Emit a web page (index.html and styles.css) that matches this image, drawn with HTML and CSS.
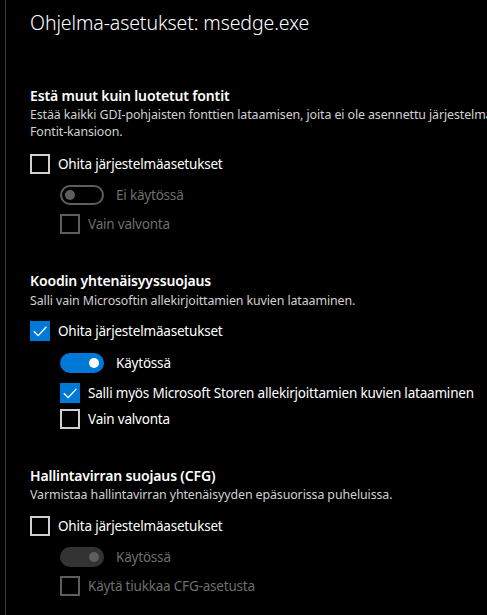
FILE: index.html
```html
<!DOCTYPE html>
<html lang="fi">
<head>
<meta charset="utf-8">
<title>Ohjelma-asetukset: msedge.exe</title>
<link rel="stylesheet" href="styles.css">
</head>
<body>
<div class="frame">
  <main class="page">
    <h1 class="title">Ohjelma-asetukset: msedge.exe</h1>

    <section class="group">
      <h2 class="head">Estä muut kuin luotetut fontit</h2>
      <p class="desc">Estää kaikki GDI-pohjaisten fonttien lataamisen, joita ei ole asennettu järjestelmän Fontit-kansioon.</p>
      <div class="row"><span class="box"></span><span class="label">Ohita järjestelmäasetukset</span></div>
      <div class="sub">
        <div class="trow disabled"><span class="toggle off"><span class="knob"></span></span><span class="label">Ei käytössä</span></div>
        <div class="row disabled"><span class="box"></span><span class="label">Vain valvonta</span></div>
      </div>
    </section>

    <section class="group g2">
      <h2 class="head">Koodin yhtenäisyyssuojaus</h2>
      <p class="desc">Salli vain Microsoftin allekirjoittamien kuvien lataaminen.</p>
      <div class="row"><span class="box checked"><svg viewBox="0 0 20 20"><path d="M3.8 10.2 L8.2 14.6 L16.4 5.8" /></svg></span><span class="label">Ohita järjestelmäasetukset</span></div>
      <div class="sub">
        <div class="trow"><span class="toggle on"><span class="knob"></span></span><span class="label">Käytössä</span></div>
        <div class="row tight"><span class="box checked"><svg viewBox="0 0 20 20"><path d="M3.8 10.2 L8.2 14.6 L16.4 5.8" /></svg></span><span class="label">Salli myös Microsoft Storen allekirjoittamien kuvien lataaminen</span></div>
        <div class="row tight"><span class="box"></span><span class="label">Vain valvonta</span></div>
      </div>
    </section>

    <section class="group g3">
      <h2 class="head">Hallintavirran suojaus (CFG)</h2>
      <p class="desc">Varmistaa hallintavirran yhtenäisyyden epäsuorissa puheluissa.</p>
      <div class="row"><span class="box"></span><span class="label">Ohita järjestelmäasetukset</span></div>
      <div class="sub">
        <div class="trow disabled"><span class="toggle ondis"><span class="knob"></span></span><span class="label">Käytössä</span></div>
        <div class="row disabled"><span class="box"></span><span class="label">Käytä tiukkaa CFG-asetusta</span></div>
      </div>
    </section>
  </main>
</div>
</body>
</html>
```

FILE: styles.css
```css
html, body {
  margin: 0;
  padding: 0;
  background: #000;
  height: 100%;
  overflow: hidden;
}
body {
  font-family: "Noto Sans", "Open Sans", sans-serif;
  color: #fff;
}
.frame {
  height: 100%;
  margin-left: 5px;
  border-left: 1px solid #3a3a3a;
  overflow: hidden;
}
.page {
  padding: 10px 0 0 24px;
  white-space: nowrap;
}
.title {
  margin: 0;
  font-size: 19.5px;
  font-weight: 300;
  line-height: 26px;
  letter-spacing: -0.1px;
}
.group {
  margin-top: 50px;
}
.g2 { margin-top: 37px; }
.g3 { margin-top: 37px; }
.head {
  margin: 0;
  font-size: 14px;
  font-weight: 600;
  line-height: 20px;
  letter-spacing: -0.15px;
}
.desc {
  margin: 0;
  font-size: 12.4px;
  line-height: 17px;
  color: #d0d0d0;
  white-space: normal;
  width: 500px;
  letter-spacing: -0.1px;
}
.g2 .desc { margin-top: 1px; }
.row, .trow {
  display: flex;
  align-items: center;
  gap: 8px;
  height: 20px;
}
.group > .row { margin-top: 14px; }
.g2 > .row { margin-top: 12px; }
.g3 > .row { margin-top: 13px; }
.sub {
  padding-left: 30px;
  padding-top: 11px;
  display: flex;
  flex-direction: column;
  gap: 9px;
}
.g2 .sub { gap: 0; padding-top: 12px; }
.g2 .sub .trow { margin-bottom: 10px; }
.g2 .sub .row.tight + .row.tight { margin-top: 6px; }
.label {
  font-size: 13.5px;
  line-height: 20px;
  letter-spacing: -0.2px;
}
.trow .label { margin-left: 4px; }
.box {
  box-sizing: border-box;
  width: 20px;
  height: 20px;
  border: 2px solid #cfcfcf;
  flex: none;
  display: flex;
}
.box.checked {
  background: #0078d7;
  border-color: #0078d7;
}
.box svg {
  width: 20px;
  height: 20px;
  margin: -2px;
}
.box svg path {
  fill: none;
  stroke: #fff;
  stroke-width: 1.3;
}
.disabled .label { color: #6e6e6e; }
.disabled .box { border-color: #5e5e5e; }
.toggle {
  box-sizing: border-box;
  width: 44px;
  height: 20px;
  border-radius: 10px;
  flex: none;
  display: flex;
  align-items: center;
  padding: 0 5px;
}
.knob {
  width: 10px;
  height: 10px;
  border-radius: 50%;
}
.toggle.off {
  border: 2px solid #5e5e5e;
  padding: 0 3px;
}
.toggle.off .knob { background: #5e5e5e; }
.toggle.on {
  background: #0078d7;
  justify-content: flex-end;
}
.toggle.on .knob { background: #fff; }
.toggle.ondis {
  background: #333;
  justify-content: flex-end;
}
.toggle.ondis .knob { background: #5e5e5e; }
```
